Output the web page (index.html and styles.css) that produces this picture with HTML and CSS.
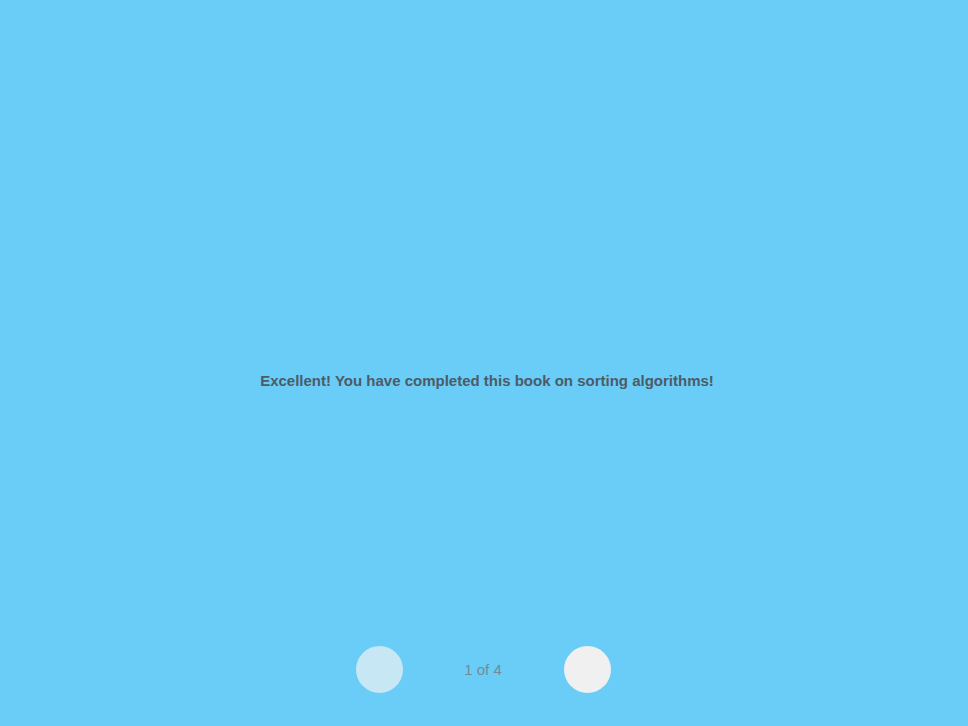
FILE: index.html
```html
<!DOCTYPE html>
<html>
<head>
<meta charset="utf-8">
<link rel="stylesheet" href="styles.css">
</head>
<body>
<div class="page">
  <main class="content">
    <p class="message">Excellent! You have completed this book on sorting algorithms!</p>
  </main>
  <footer class="pager">
    <button class="nav prev" aria-label="Previous"></button>
    <span class="count">1 of 4</span>
    <button class="nav next" aria-label="Next"></button>
  </footer>
</div>
</body>
</html>
```

FILE: styles.css
```css
html, body {
  margin: 0;
  padding: 0;
  height: 100%;
}
body {
  background: #69cdf7;
  font-family: "Liberation Sans", Arial, sans-serif;
}
.page {
  height: 726px;
  display: flex;
  flex-direction: column;
}
.content {
  flex: 1;
  display: flex;
  align-items: center;
  justify-content: center;
  padding-top: 116px;
  padding-left: 6px;
}
.message {
  margin: 0;
  font-size: 15px;
  font-weight: bold;
  color: #4d5b66;
  line-height: 18px;
}
.pager {
  display: flex;
  align-items: center;
  justify-content: center;
  padding-bottom: 33px;
  padding-right: 2px;
}
.nav {
  width: 47px;
  height: 47px;
  border-radius: 50%;
  border: none;
  padding: 0;
  margin: 0;
}
.prev {
  background: #c8e7f4;
}
.next {
  background: #f0f0f0;
}
.count {
  width: 161px;
  text-align: center;
  font-size: 15px;
  color: #75899a;
  box-sizing: border-box;
}
```
